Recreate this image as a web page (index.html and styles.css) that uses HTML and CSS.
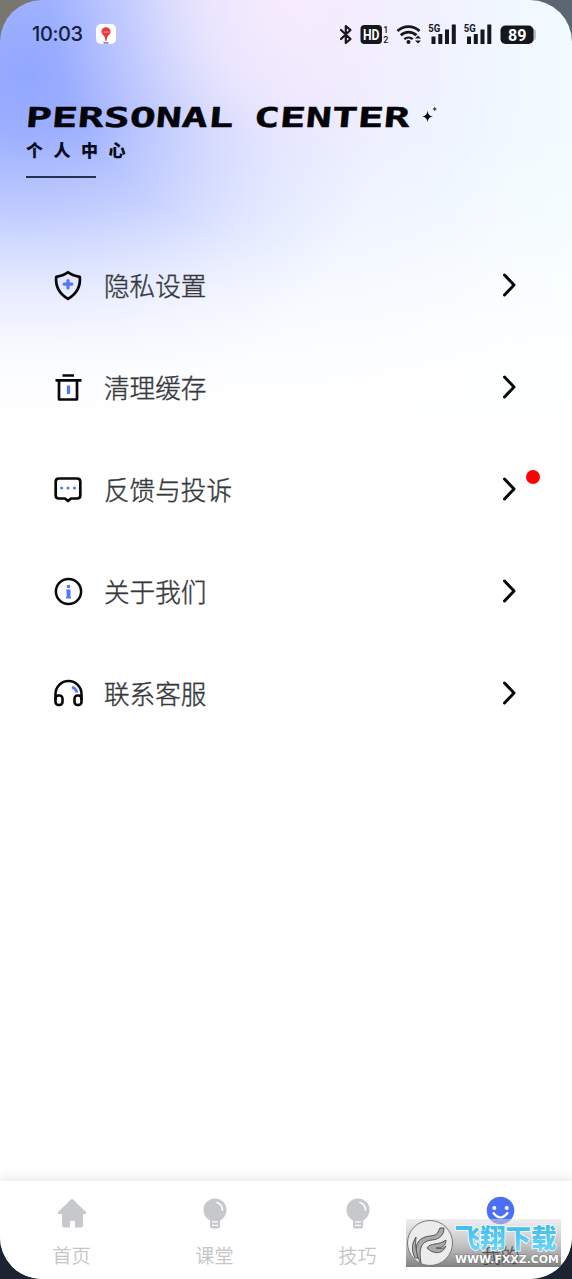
FILE: index.html
```html
<!DOCTYPE html>
<html lang="zh-CN">
<head>
<meta charset="utf-8">
<title>个人中心</title>
<link rel="stylesheet" href="styles.css">
</head>
<body>
<div class="screen">
  <header class="status">
    <span class="clock">10:03</span>
    <svg class="app" width="20" height="20" viewBox="0 0 20 20"><rect width="20" height="20" rx="5" fill="#fff"/><path d="M10 3.200a4.600 4.600 0 0 1 4.600 4.600c0 2.500-2.400 3.200-3.400 5.400L10.500 17h-1l-.7-3.800C7.800 11 5.400 10.300 5.400 7.800A4.600 4.600 0 0 1 10 3.200z" fill="#ea3a3d"/><path d="M7.500 8h5" stroke="#ff8f8f" stroke-width="1.600" stroke-dasharray="1.400 .4"/><path d="M7.500 18.800h2.500" stroke="#e9569c" stroke-width="1.800"/><path d="M10 18.800h2.500" stroke="#3f9cf0" stroke-width="1.800"/></svg>
    <svg class="sys" width="200" height="24" viewBox="336 23 200 24">
      <path d="M341 30l9.500 9-4.700 4V26l4.700 4-9.500 9" fill="none" stroke="#15171c" stroke-width="2.200" stroke-linejoin="round" stroke-linecap="round"/>
      <rect x="360.500" y="25" width="21.500" height="19" rx="4" fill="#15171c"/>
      <text class="hd" x="363" y="39.600" textLength="16.500" lengthAdjust="spacingAndGlyphs">HD</text>
      <text class="sim" x="383.300" y="33">1</text><text class="sim" x="383.300" y="43">2</text>
      <g fill="none" stroke="#15171c" stroke-width="2.700"><path d="M397.500 31a16 16 0 0 1 22 0"/><path d="M400.800 35.300a11 11 0 0 1 15.600 0"/><path d="M404.300 39.200a6.300 6.300 0 0 1 8.400 0" stroke-width="2.400"/></g>
      <circle cx="408.500" cy="42" r="2" fill="#15171c"/><path d="M415 38.500l3-3 3 3zM415 40.500l3 3 3-3z" fill="#15171c"/>
      <text class="net" x="428.300" y="32" textLength="12" lengthAdjust="spacingAndGlyphs">5G</text>
      <path d="M431.500 36.500h4V44h-4zM438.300 34h4v10h-4zM445 29.500h4V44h-4zM451.800 24.500h4V44h-4z" fill="#15171c"/>
      <text class="net" x="463.800" y="32" textLength="12" lengthAdjust="spacingAndGlyphs">5G</text>
      <path d="M467 36.500h4V44h-4zM473.800 34h4v10h-4zM480.500 29.500h4V44h-4zM487.300 24.500h4V44h-4z" fill="#15171c"/>
      <rect x="508" y="28.500" width="28" height="12.500" rx="4" fill="#b8bec4"/><rect x="500.500" y="25.500" width="33" height="18.500" rx="5" fill="#15171c"/>
      <text class="battery" x="508" y="41" textLength="18.500" lengthAdjust="spacingAndGlyphs">89</text>
    </svg>
  </header>

  <section class="heading">
    <svg class="title" width="420" height="30" viewBox="24 102 420 30">
      <g class="display" transform="translate(26 127) skewX(-5)">
        <text x="-1" y="0" textLength="208" lengthAdjust="spacingAndGlyphs">PERSONAL</text>
        <text x="227" y="0" textLength="156" lengthAdjust="spacingAndGlyphs">CENTER</text>
      </g>
      <path d="M427.500 110.500q.3 5.500 5.500 6-5.200.5-5.500 6-.3-5.500-5.500-6 5.200-.5 5.500-6z" fill="#080a12"/><path d="M434.700 106.700q.6 1.900 2.300 2.300-1.700.4-2.300 2.300-.6-1.900-2.300-2.300 1.700-.4 2.300-2.300z" fill="#3a3e48"/>
    </svg>
    <h1 class="subtitle">个人中心</h1>
    <div class="rule"></div>
  </section>

  <main class="menu">
    <div class="row">
      <svg class="icon" viewBox="0 0 32 34"><path d="M16 4.200c3.500 2.800 7.500 3.800 11.800 4.600.8 8-2.500 16.500-11.800 22-9.300-5.500-12.600-14-11.800-22C8.500 8 12.500 7 16 4.200z" fill="none" stroke="#07080a" stroke-width="2.700" stroke-linejoin="round"/><path d="M16 12.500v7.500M12.200 16.200h7.600" stroke="#5078f7" stroke-width="3.200" stroke-linecap="round"/></svg>
      <span class="label">隐私设置</span>
      <svg class="arrow" viewBox="0 0 16 26"><path d="M3.500 3l9.500 10-9.500 10"/></svg>
    </div>
    <div class="row">
      <svg class="icon" viewBox="0 0 32 34"><path d="M10.500 5.500h11.500M3.500 10.300h26" fill="none" stroke="#07080a" stroke-width="2.700"/><path d="M7 10.500V29q0 .5.500.5h17q.5 0 .5-.5V10.500" fill="none" stroke="#07080a" stroke-width="2.700"/><path d="M16.500 15.500v8.500" stroke="#5078f7" stroke-width="3.200"/></svg>
      <span class="label">清理缓存</span>
      <svg class="arrow" viewBox="0 0 16 26"><path d="M3.500 3l9.500 10-9.500 10"/></svg>
    </div>
    <div class="row">
      <svg class="icon" viewBox="0 0 32 34"><path d="M7 6.500h18q3.300 0 3.300 3v14q0 3-3.300 3h-6L16 29l-3-2.500H7q-3.300 0-3.300-3v-14q0-3 3.300-3z" fill="none" stroke="#07080a" stroke-width="2.700" stroke-linejoin="round"/><g fill="#5078f7"><circle cx="9.700" cy="16" r="1.500"/><circle cx="16" cy="16" r="1.500"/><circle cx="22.500" cy="16" r="1.500"/></g></svg>
      <span class="label">反馈与投诉</span>
      <svg class="arrow" viewBox="0 0 16 26"><path d="M3.500 3l9.500 10-9.500 10"/></svg>
      <i class="dot"></i>
    </div>
    <div class="row">
      <svg class="icon" viewBox="0 0 32 34"><circle cx="16.500" cy="17.500" r="12.600" fill="none" stroke="#07080a" stroke-width="2.500"/><circle cx="16.500" cy="12.500" r="1.800" fill="#5078f7"/><path d="M14.300 15.500h4.200V23h.5v1.500h-5V23h.6v-5.500h-.3z" fill="#5078f7"/></svg>
      <span class="label">关于我们</span>
      <svg class="arrow" viewBox="0 0 16 26"><path d="M3.500 3l9.500 10-9.500 10"/></svg>
    </div>
    <div class="row">
      <svg class="icon" viewBox="0 0 32 34"><g fill="none" stroke="#07080a" stroke-width="2.600"><path d="M3.500 24v-6a13 13 0 0 1 26 0v6"/><rect x="3.500" y="19.500" width="7" height="9.500" rx="3"/><rect x="22.500" y="19.500" width="7" height="9.500" rx="3"/></g><path d="M20 11q4 1.500 5 5.500" fill="none" stroke="#5078f7" stroke-width="2.800"/></svg>
      <span class="label">联系客服</span>
      <svg class="arrow" viewBox="0 0 16 26"><path d="M3.500 3l9.500 10-9.500 10"/></svg>
    </div>
  </main>

  <nav class="tabs">
    <div class="tab"><svg class="tabicon" viewBox="0 0 32 34"><path d="M16 2.500l14 13.500q1 2-1.500 2H27v11q0 2.500-2.500 2.500H19V26q0-1.300-1.300-1.300h-2.400Q14 24.700 14 26v5.500H8.500Q6 31.500 6 29V18H3.500Q1 18 2 16z" fill="#c6c8cb"/></svg><span>首页</span></div>
    <div class="tab"><svg class="tabicon" viewBox="0 0 32 34"><circle cx="16" cy="14" r="11.500" fill="#c6c8cb"/><path d="M11 22h10v8q0 2.500-2.500 2.500h-5Q11 32.500 11 30z" fill="#c6c8cb"/><path d="M13 25.800h6M13 29.300h6" stroke="#fff" stroke-width="1.200"/><path d="M18 6.500q5 1.500 5.500 7.500" stroke="#fff" stroke-width="1.700" fill="none" stroke-linecap="round"/></svg><span>课堂</span></div>
    <div class="tab"><svg class="tabicon" viewBox="0 0 32 34"><circle cx="16" cy="14" r="11.500" fill="#c6c8cb"/><path d="M11 22h10v8q0 2.500-2.500 2.500h-5Q11 32.500 11 30z" fill="#c6c8cb"/><path d="M13 25.800h6M13 29.300h6" stroke="#fff" stroke-width="1.200"/><path d="M18 6.500q5 1.500 5.500 7.500" stroke="#fff" stroke-width="1.700" fill="none" stroke-linecap="round"/></svg><span>技巧</span></div>
    <div class="tab active"><svg class="tabicon" viewBox="0 0 32 34"><circle cx="15.500" cy="14.500" r="13.800" fill="#4b70f5"/><circle cx="9.300" cy="12" r="2" fill="#fff"/><circle cx="21.700" cy="12" r="2" fill="#fff"/><path d="M8.500 17q7 9 14 0" stroke="#fff" stroke-width="2.200" fill="none" stroke-linecap="round"/></svg><span>我的</span></div>
  </nav>
</div>

<div class="watermark">
  <svg width="156" height="48" viewBox="406 1219 156 48">
    <defs>
      <linearGradient id="plate" x1="0" y1="0" x2="0" y2="1"><stop offset="0" stop-color="#ddd" stop-opacity=".5"/><stop offset=".5" stop-color="#999" stop-opacity=".55"/><stop offset="1" stop-color="#555" stop-opacity=".75"/></linearGradient>
      <linearGradient id="brand" x1="0" y1="0" x2="0" y2="1"><stop offset="0" stop-color="#34b4e8"/><stop offset="1" stop-color="#74dbf8"/></linearGradient>
    </defs>
    <rect x="406" y="1219" width="155" height="48" fill="url(#plate)"/>
    <circle cx="430" cy="1243" r="22.500" fill="#ececec" stroke="#777" stroke-width="1"/>
    <g fill="#a9a9a9" stroke="#555" stroke-width="1" stroke-linejoin="round">
      <path d="M421 1263c-7-9-6-20 0-24 7-5 14-1 17-7l2-4 4 0c0 7-4 11-12 12-9 1-14 6-11 23z"/>
      <path d="M427 1248c4-6 11-2 19-8 0 6-4 8-10 8 4 1 7 1 10-2-4 9-13 8-19 2z"/>
      <path d="M415 1258c-4-8-3-15 1-21-1 8 0 14 2 21z"/>
    </g>
    <text class="brand-name" x="454.500" y="1248" textLength="102" lengthAdjust="spacingAndGlyphs">飞翔下载</text>
    <text class="brand-url" x="455" y="1262.500" textLength="104" lengthAdjust="spacingAndGlyphs">WWW.FXXZ.COM</text>
  </svg>
</div>
</body>
</html>
```
FILE: styles.css
```css
* { box-sizing: border-box; }
body {
  position: relative;
  margin: 0;
  height: 1279px;
  overflow: hidden;
  background: linear-gradient(transparent 50%, #1b2430 50%), linear-gradient(90deg, #77776d 50%, #5c6673 50%);
  font-family: "Noto Sans CJK SC", sans-serif;
}
.screen {
  display: flex;
  flex-direction: column;
  width: 572px;
  height: 1279px;
  border-radius: 42px;
  overflow: hidden;
  background:
    linear-gradient(180deg, rgba(255,255,255,0) 130px, rgba(255,255,255,.22) 210px, rgba(255,255,255,.58) 290px, rgba(255,255,255,.9) 370px, #fff 440px),
    radial-gradient(ellipse 240px 240px at 290px 5px, rgba(248,236,253,.95) 0, rgba(247,237,253,.75) 35%, rgba(246,240,254,.3) 70%, rgba(246,242,254,0) 100%),
    radial-gradient(ellipse 500px 520px at 25px 75px, #91a7ff 0, #9eb0ff 14%, #b0bfff 28%, #c5d0ff 42%, #dae2ff 56%, rgba(233,241,255,.8) 72%, rgba(243,254,255,0) 100%),
    linear-gradient(100deg, #eef1ff 35%, #f3feff 85%);
}
.status {
  display: flex;
  align-items: center;
  height: 68px;
  padding: 0 36px 0 32px;
}
.clock {
  width: 64px;
  font: 500 20px/24px Inter, Roboto, sans-serif;
  letter-spacing: -.4px;
  color: #14203e;
}
.sys { margin-left: auto; margin-top: 2px; }
.sys text { font-family: Roboto, sans-serif; font-weight: 700; fill: #15171c; }
.sys .hd { font-size: 14px; fill: #fff; }
.sys .sim { font-size: 9px; font-weight: 500; }
.sys .net { font-size: 10.500px; }
.sys .battery { font-size: 17px; fill: #fff; }
.heading {
  display: flex;
  flex-direction: column;
  height: 167px;
  padding: 34px 0 0 24px;
}
.title { flex: none; }
.display { font-family: "DejaVu Sans Mono", monospace; font-weight: 700; font-size: 27.400px; fill: #030409; stroke: #030409; stroke-width: .4; }
.subtitle {
  margin: 6px 0 0 2px;
  font-size: 17px;
  font-weight: 900;
  line-height: 24px;
  letter-spacing: 10.500px;
  color: #080b18;
}
.rule { width: 70px; height: 2px; margin: 14px 0 0 2px; background: #27304f; }
.row {
  position: relative;
  display: flex;
  align-items: center;
  height: 102px;
  padding: 0 55px 0 52px;
}
.icon { width: 32px; height: 34px; margin-top: -2px; }
.label {
  margin: -2px 0 0 20px;
  font-size: 25.600px;
  font-weight: 300;
  line-height: 38px;
  color: #36383c;
  -webkit-text-stroke: .4px #36383c;
}
.arrow { width: 16px; height: 26px; margin: -2px 0 0 auto; }
.arrow path { fill: none; stroke: #07080a; stroke-width: 3; stroke-linecap: round; stroke-linejoin: round; }
.dot {
  position: absolute;
  left: 526px;
  top: 31px;
  width: 14px;
  height: 14px;
  border-radius: 50%;
  background: #f70505;
}
.tabs {
  display: flex;
  height: 98px;
  margin-top: auto;
  background: #fff;
  box-shadow: 0 -2px 12px rgba(0,0,0,.11);
}
.tab {
  display: flex;
  flex: 1;
  flex-direction: column;
  align-items: center;
  padding-top: 15px;
  color: #c2c3c5;
  font-size: 19px;
  font-weight: 300;
  line-height: 28px;
  -webkit-text-stroke: .3px;
}
.tabicon { width: 32px; height: 34px; margin-bottom: 11px; }
.active { color: #08090b; }
.watermark { position: absolute; left: 406px; top: 1219px; width: 156px; height: 48px; }
.watermark svg { display: block; }
.brand-name { font: 900 26px "Noto Sans CJK SC", sans-serif; fill: url(#brand); stroke: #fff; stroke-width: 1.500px; paint-order: stroke; }
.brand-url { font: 700 10.500px "DejaVu Sans", sans-serif; fill: #fff; stroke: #777; stroke-width: 1px; paint-order: stroke; }
```
